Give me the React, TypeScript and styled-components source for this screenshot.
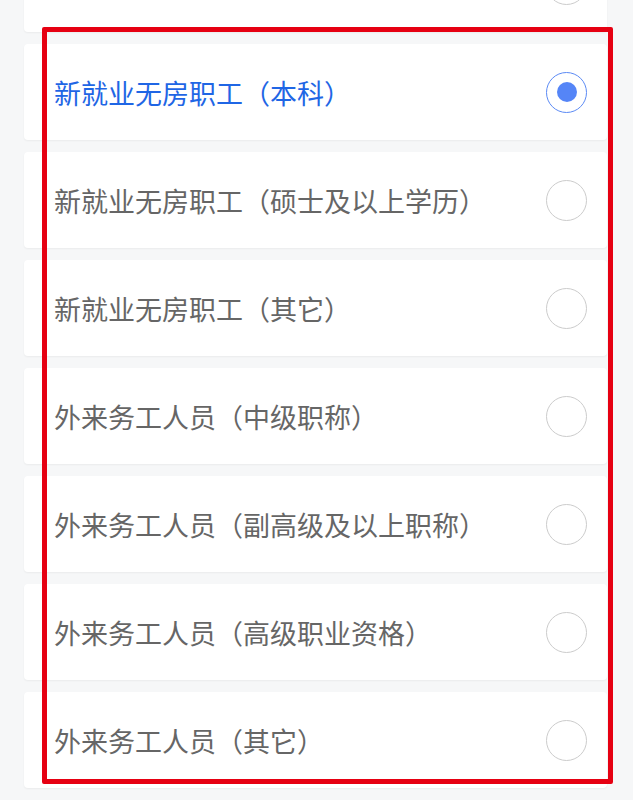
import React, { useState } from 'react'
import styled, { createGlobalStyle } from 'styled-components'

const GlobalStyle = createGlobalStyle`
  html, body {
    margin: 0;
    padding: 0;
    background: #f6f7f8;
    font-family: "Noto Sans CJK SC", "Noto Sans", sans-serif;
  }
`

// 第一项在屏幕上方，只露出单选框的一角
const OPTIONS = [
  '',
  '新就业无房职工（本科）',
  '新就业无房职工（硕士及以上学历）',
  '新就业无房职工（其它）',
  '外来务工人员（中级职称）',
  '外来务工人员（副高级及以上职称）',
  '外来务工人员（高级职业资格）',
  '外来务工人员（其它）',
]

const App: React.FC = () => {
  const [selected, setSelected] = useState(1)

  return (
    <>
      <GlobalStyle />
      <Page>
        <List>
          {OPTIONS.map((label, i) => (
            <Card key={i} onClick={() => setSelected(i)}>
              <Label $active={selected === i}>{label}</Label>
              <Radio $active={selected === i}>{selected === i && <Dot />}</Radio>
            </Card>
          ))}
        </List>
        {/* 标注框 */}
        <Highlight />
      </Page>
    </>
  )
}

export default App

const Page = styled.div`
  position: relative;
  width: 633px;
  height: 800px;
  overflow: hidden;
  background: #f6f7f8;
`

const List = styled.div`
  display: flex;
  flex-direction: column;
  gap: 12px;
  margin-top: -64px;
  padding: 0 26px 0 24px;
`

const Card = styled.div`
  height: 96px;
  box-sizing: border-box;
  background: #fff;
  border-radius: 4px;
  box-shadow: 0 1px 2px rgba(0, 0, 0, 0.05);
  display: flex;
  align-items: center;
  justify-content: space-between;
  padding: 0 20px 0 30px;
  cursor: pointer;
`

const Label = styled.span<{ $active?: boolean }>`
  font-size: 27px;
  line-height: 1;
  color: ${(p) => (p.$active ? '#1f66e5' : '#666')};
  white-space: nowrap;
`

const Radio = styled.span<{ $active?: boolean }>`
  width: 41px;
  height: 41px;
  box-sizing: border-box;
  border-radius: 50%;
  border: 1.5px solid ${(p) => (p.$active ? '#5b8af5' : '#cccccc')};
  display: flex;
  align-items: center;
  justify-content: center;
  background: #fff;
`

const Dot = styled.span`
  width: 20px;
  height: 20px;
  border-radius: 50%;
  background: #5585f7;
`

const Highlight = styled.div`
  position: absolute;
  left: 42px;
  top: 27px;
  width: 571px;
  height: 757px;
  box-sizing: border-box;
  border: 5px solid #e60012;
  border-radius: 2px;
  pointer-events: none;
`
